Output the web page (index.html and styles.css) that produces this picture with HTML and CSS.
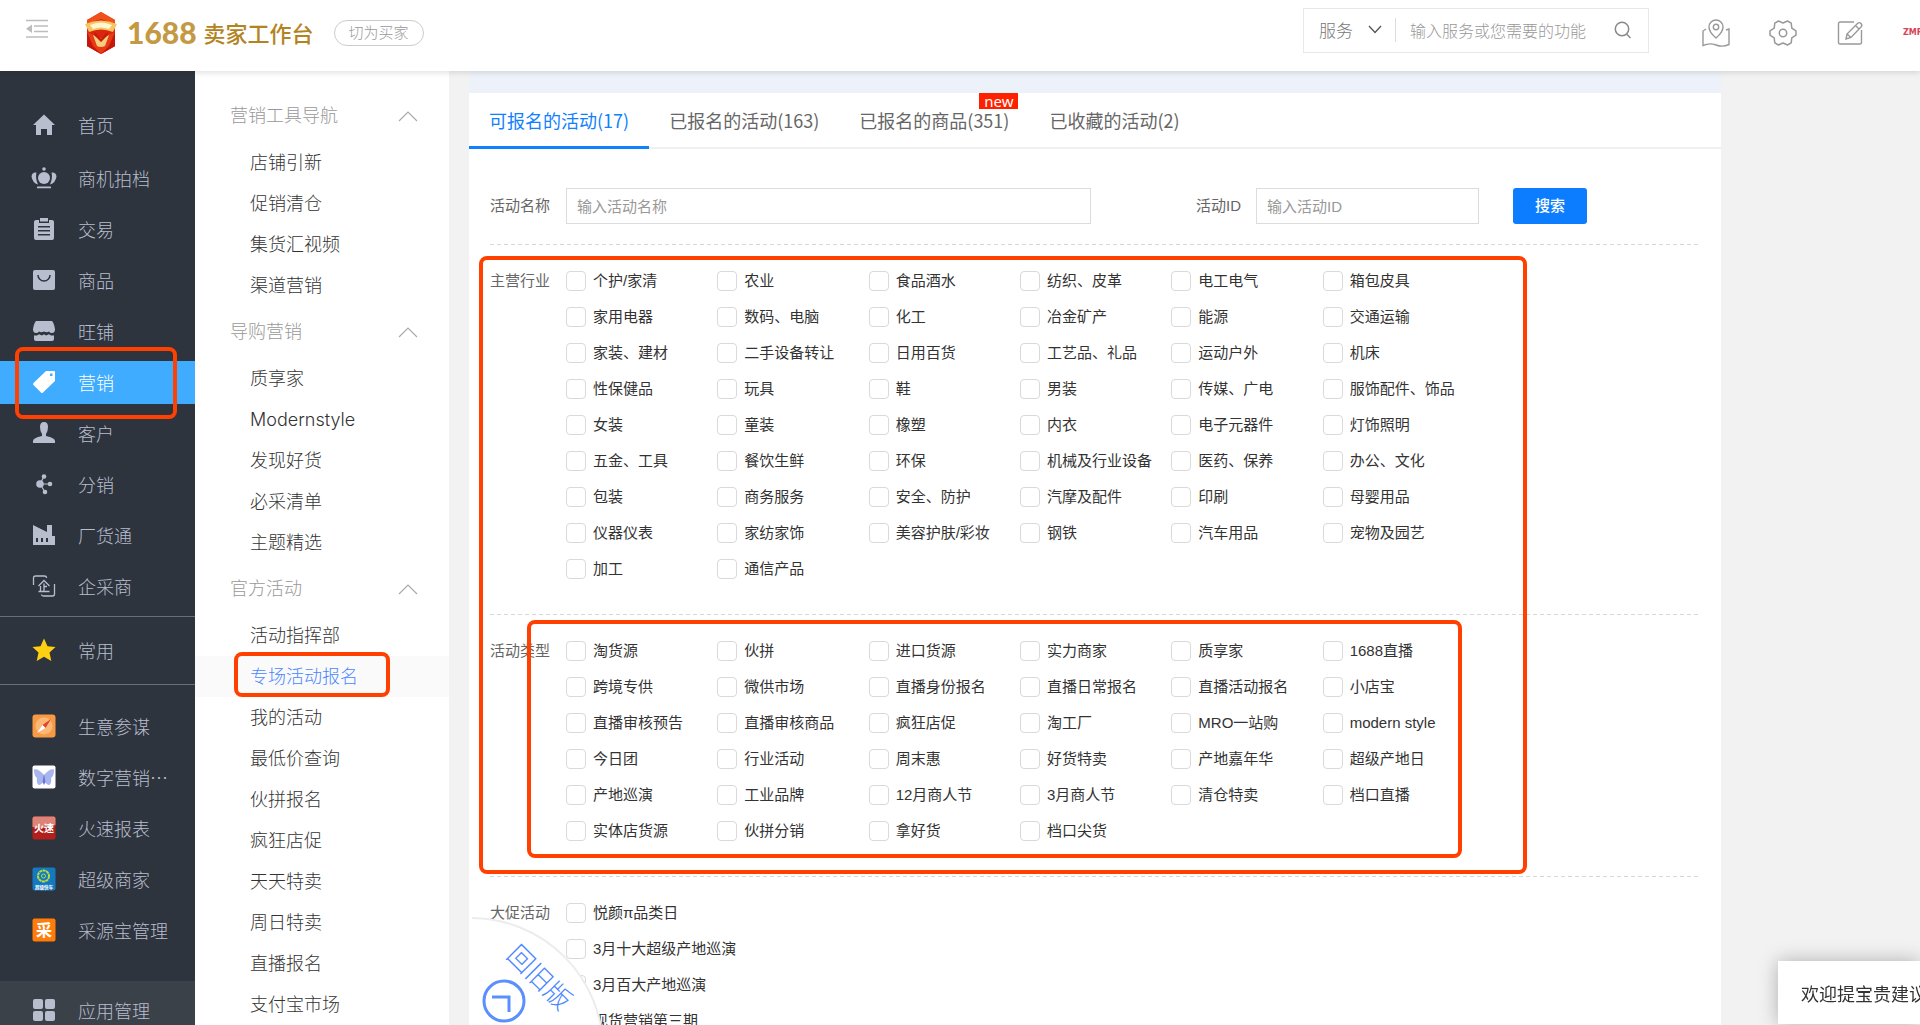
FILE: index.html
```html
<!DOCTYPE html>
<html lang="zh-CN">
<head>
<meta charset="utf-8">
<title>1688 卖家工作台</title>
<link rel="stylesheet" href="styles.css">
</head>
<body>
<header class="topbar">
  <button class="icon-btn menu-toggle" type="button" aria-label="收起菜单">
    <svg width="22" height="20" viewBox="0 0 22 20" fill="none" stroke="#bdbdbd" stroke-width="1.5"><path d="M0 1.500h22M8 7h14M8 12.500h14M0 18h22"/><path d="M0 9.700L6 5.500v8.500z" fill="#bdbdbd" stroke="none"/></svg>
  </button>
  <a class="brand" href="#">
    <svg width="32" height="42" viewBox="0 0 32 42"><path d="M16 0L30 8v26L16 42 2 34V8z" fill="#d9260f"/><path d="M16 0L30 8v4L16 7 2 12V8z" fill="#f0501c"/><path d="M2 20l14 6 14-6v14L16 42 2 34z" fill="#e83a17"/><path d="M2 20l6 14 8 8-14-8zM30 20l-6 14-8 8 14-8z" fill="#c4160c"/><path d="M0 12q16-7 32 0l-4 8q-12-5-24 0z" fill="#f6c463"/><path d="M5 13q11-5 22 0l-3 4q-8-3-16 0z" fill="#fff6d2"/><path d="M8 23l8 4 8-4-4 11q-4 2-8 0z" fill="#f5cf7c"/><path d="M10 20l6 7 6-7 1 3-7 7-7-7z" fill="#c81a0d"/></svg>
    <span class="brand-num">1688</span>
    <span class="brand-name">卖家工作台</span>
  </a>
  <button class="pill" type="button">切为买家</button>
  <form class="search">
    <select class="search-scope" aria-label="搜索范围"><option>服务</option></select>
    <svg class="chev" width="14" height="9" viewBox="0 0 14 9" fill="none" stroke="#555" stroke-width="1.300"><path d="M1 1l6 6.500L13 1"/></svg>
    <input class="search-input" type="text" aria-label="搜索" placeholder="输入服务或您需要的功能">
    <button class="icon-btn" type="button" aria-label="搜索"><svg width="18" height="18" viewBox="0 0 18 18" fill="none" stroke="#888" stroke-width="1.500"><circle cx="8" cy="8" r="6.700"/><path d="M12.500 13l4 4"/></svg></button>
  </form>
  <nav class="tools">
    <button class="icon-btn" type="button" aria-label="地图"><svg width="28" height="28" viewBox="0 0 28 28" fill="none" stroke="#999" stroke-width="1.400"><path d="M4 10L1 12v14.500q6.500-3 13-.5t13-.5V10l-3 1"/><path d="M14 19q-7-6-7-11a7 7 0 0 1 14 0q0 5-7 11z"/><circle cx="14" cy="8" r="2.700"/></svg></button>
    <button class="icon-btn" type="button" aria-label="设置"><svg width="28" height="28" viewBox="0 0 28 28" fill="none" stroke="#999" stroke-width="1.500" stroke-linejoin="round"><path d="M9.500 2l4.500 2 4.500-2 3.700 2.200.6 5 4.200 2.600v4.400l-4.200 2.600-.6 5L18.500 26 14 24l-4.500 2-3.700-2.200-.6-5L1 16.200v-4.400l4.200-2.600.6-5z"/><circle cx="14" cy="14" r="3.700"/></svg></button>
    <button class="icon-btn" type="button" aria-label="反馈"><svg width="28" height="28" viewBox="0 0 28 28" fill="none" stroke="#999" stroke-width="1.400"><path d="M18 3H4a1.500 1.500 0 0 0-1.500 1.500v19A1.500 1.500 0 0 0 4 25h20a1.500 1.500 0 0 0 1.500-1.500V11"/><path d="M10 20l1-5L21.500 4.500a2 2 0 0 1 3.500 3.500L15 18.500zM19.500 6.500l3.500 3.500M11 15l4 3.500"/></svg></button>
    <a class="shop" href="#">ZMRA</a>
  </nav>
</header>

<div class="workspace">
  <nav class="side">
    <ul class="side-list side-main">
      <li><a href="#"><svg viewBox="0 0 24 24"><path d="M12 1.500L23 12h-3v10h-5v-6H9v6H4V12H1z"/></svg>首页</a></li>
      <li><a href="#"><svg viewBox="0 0 24 24"><circle cx="12" cy="3" r="1.800"/><circle cx="12" cy="12" r="6"/><path d="M4.500 6.500Q0 6-.5 10.500.500 17 6 18.500 3 12 4.500 6.500zM19.500 6.500q4.500-.5 5 4-1 6.500-6.500 8 3-6.500 1.500-12zM5 20.500h14v1.800H5z"/></svg>商机拍档</a></li>
      <li><a href="#"><svg viewBox="0 0 24 24"><path fill-rule="evenodd" d="M4 3h3v3h10V3h3q2 0 2 2v16q0 2-2 2H4q-2 0-2-2V5q0-2 2-2zM6 9v1.500h12V9zm0 4v1.500h12V13zm0 4v1.500h12V17z"/><rect x="8" y="1" width="8" height="3.500"/></svg>交易</a></li>
      <li><a href="#"><svg viewBox="0 0 24 24"><rect x="1" y="2" width="22" height="20" rx="2"/><path d="M6 7a6 6 0 0 0 12 0" fill="none" stroke="#2e343d" stroke-width="1.500"/></svg>商品</a></li>
      <li><a href="#"><svg viewBox="0 0 24 24"><path d="M4 2h16q2 2 3 8 0 4-3 4-2 0-3-1.500Q15 14 12 12.500 9 14 7 12.500 6 14 4 14q-3 0-3-4 1-6 3-8z"/><path d="M2 16.500h3l2-1.200 3 1.200 2-1.200 2 1.200 3-1.200 2 1.200h3V20q0 2-2 2H4q-2 0-2-2z"/></svg>旺铺</a></li>
      <li class="active"><a href="#" aria-current="page"><svg viewBox="0 0 24 24"><path fill-rule="evenodd" d="M14 1h8q1 0 1 1v9L11 22.500q-1 1-2 0L1.500 15q-1-1 0-2zM18 3.500v2.500h2.500V3.500z"/></svg>营销</a></li>
      <li><a href="#"><svg viewBox="0 0 24 24"><path d="M12 1q4 0 4 5 0 4-2 7v2q9 2 9 5v2H1v-2q0-3 9-5v-2Q8 10 8 6q0-5 4-5z"/></svg>客户</a></li>
      <li><a href="#"><svg viewBox="0 0 24 24"><circle cx="8" cy="12" r="3.800"/><circle cx="12" cy="4.500" r="2.300"/><circle cx="18" cy="12" r="2.300"/><circle cx="13" cy="20" r="2.300"/><path d="M12 4.500L8 12h10M8 12l5 8" fill="none" stroke="#b8bece" stroke-width="1.200"/></svg>分销</a></li>
      <li><a href="#"><svg viewBox="0 0 24 24"><path fill-rule="evenodd" d="M1 2l14 7V2h5v11h3v9H1zM4 15v4h2v-4zm5 0v4h2v-4zm5 0v4h2v-4z"/></svg>厂货通</a></li>
      <li><a href="#"><svg viewBox="0 0 24 24" class="line-icon"><path d="M1.500 11V4q0-2 2-2h9q2 0 2 2M22.500 10v10q0 2-2 2h-9q-2 0-2-1.500M6.500 12l5.500-5.500 5.500 5.500M12 9.500V17M15 12.500h-3M8.500 12v5M6.500 17.500h11"/></svg>企采商</a></li>
    </ul>
    <ul class="side-list side-fav">
      <li><a href="#"><svg viewBox="0 0 24 24"><path fill="#ffd012" d="M12 .5l3.500 7.700 8 .8-6 5.600 1.800 8.400L12 18.700 4.700 23l1.800-8.400-6-5.600 8-.8z"/></svg>常用</a></li>
    </ul>
    <ul class="side-list side-apps">
      <li><a href="#"><svg viewBox="0 0 24 24"><rect x=".5" y=".5" width="23" height="23" rx="3" fill="#f79a45"/><circle cx="12" cy="12" r="8.500" fill="#fbb877"/><path d="M19 5l-5.500 9-3-3z" fill="#e2452b"/><path d="M5 19l5.500-8 3 3z" fill="#fff"/></svg>生意参谋</a></li>
      <li><a href="#"><svg viewBox="0 0 24 24"><rect x=".5" y=".5" width="23" height="23" rx="2" fill="#fff"/><path d="M12 10Q6 3 1.800 4.500 2 11 5 13q-1 5 1.500 7Q10 20 12 15q2 5 5.500 5 2.500-2 1.500-7 3-2 3.200-8.500Q18 3 12 10z" fill="#a9b6ee"/><path d="M12 9l1.500 8L12 20l-1.500-3z" fill="#6479d8"/></svg>数字营销⋯</a></li>
      <li><a href="#"><svg viewBox="0 0 24 24"><rect x=".5" y=".5" width="23" height="23" rx="2" fill="#b3201c"/><path d="M2.500.5h19q2 0 2 2V9q-11 5-23 2V2.500q0-2 2-2z" fill="#dc8478"/><text x="12" y="16" class="tile-text" font-size="10">火速</text></svg>火速报表</a></li>
      <li><a href="#"><svg viewBox="0 0 24 24"><rect x=".5" y=".5" width="23" height="23" rx="2" fill="#1479c0"/><circle cx="11.500" cy="9" r="5.500" fill="none" stroke="#b9dc3c" stroke-width="2" stroke-dasharray="3 .5"/><circle cx="11.500" cy="9" r="2" fill="none" stroke="#b9dc3c"/><text x="12" y="21.500" class="tile-text" font-size="4.500">超级快车</text></svg>超级商家</a></li>
      <li><a href="#"><svg viewBox="0 0 24 24"><rect x=".5" y=".5" width="23" height="23" rx="2" fill="#ff7c0a"/><text x="12" y="18" class="tile-text" font-size="16">采</text></svg>采源宝管理</a></li>
    </ul>
    <ul class="side-list side-manage">
      <li><a href="#"><svg viewBox="0 0 24 24"><rect x="1" y="1" width="10" height="10" rx="2"/><rect x="13" y="1" width="10" height="10" rx="2"/><rect x="1" y="13" width="10" height="10" rx="2"/><rect x="13" y="13" width="10" height="10" rx="2"/></svg>应用管理</a></li>
    </ul>
  </nav>

  <nav class="sub">
    <button class="sub-head" type="button">营销工具导航<svg width="20" height="12" viewBox="0 0 20 12"><path d="M1 11l9-9 9 9"/></svg></button>
    <ul>
      <li><a href="#">店铺引新</a></li>
      <li><a href="#">促销清仓</a></li>
      <li><a href="#">集货汇视频</a></li>
      <li><a href="#">渠道营销</a></li>
    </ul>
    <button class="sub-head" type="button">导购营销<svg width="20" height="12" viewBox="0 0 20 12"><path d="M1 11l9-9 9 9"/></svg></button>
    <ul>
      <li><a href="#">质享家</a></li>
      <li><a href="#">Modernstyle</a></li>
      <li><a href="#">发现好货</a></li>
      <li><a href="#">必采清单</a></li>
      <li><a href="#">主题精选</a></li>
    </ul>
    <button class="sub-head" type="button">官方活动<svg width="20" height="12" viewBox="0 0 20 12"><path d="M1 11l9-9 9 9"/></svg></button>
    <ul>
      <li><a href="#">活动指挥部</a></li>
      <li class="active"><a href="#" aria-current="page">专场活动报名</a></li>
      <li><a href="#">我的活动</a></li>
      <li><a href="#">最低价查询</a></li>
      <li><a href="#">伙拼报名</a></li>
      <li><a href="#">疯狂店促</a></li>
      <li><a href="#">天天特卖</a></li>
      <li><a href="#">周日特卖</a></li>
      <li><a href="#">直播报名</a></li>
      <li><a href="#">支付宝市场</a></li>
    </ul>
  </nav>

  <main class="main">
    <div class="panel">
      <div class="tabs" role="tablist">
        <button class="tab selected" type="button" role="tab" aria-selected="true">可报名的活动(17)</button>
        <button class="tab" type="button" role="tab">已报名的活动(163)</button>
        <button class="tab" type="button" role="tab">已报名的商品(351)<span class="badge">new</span></button>
        <button class="tab" type="button" role="tab">已收藏的活动(2)</button>
      </div>

      <form class="filters">
        <div class="query">
          <label for="act-name">活动名称</label>
          <input class="field name-field" id="act-name" type="text" placeholder="输入活动名称">
          <label class="id-label" for="act-id">活动ID</label>
          <input class="field id-field" id="act-id" type="text" placeholder="输入活动ID">
          <button class="submit" type="button">搜索</button>
        </div>

        <div class="marked">
          <section class="group">
            <h2>主营行业</h2>
            <div class="options">
              <label><input type="checkbox">个护/家清</label>
              <label><input type="checkbox">农业</label>
              <label><input type="checkbox">食品酒水</label>
              <label><input type="checkbox">纺织、皮革</label>
              <label><input type="checkbox">电工电气</label>
              <label><input type="checkbox">箱包皮具</label>
              <label><input type="checkbox">家用电器</label>
              <label><input type="checkbox">数码、电脑</label>
              <label><input type="checkbox">化工</label>
              <label><input type="checkbox">冶金矿产</label>
              <label><input type="checkbox">能源</label>
              <label><input type="checkbox">交通运输</label>
              <label><input type="checkbox">家装、建材</label>
              <label><input type="checkbox">二手设备转让</label>
              <label><input type="checkbox">日用百货</label>
              <label><input type="checkbox">工艺品、礼品</label>
              <label><input type="checkbox">运动户外</label>
              <label><input type="checkbox">机床</label>
              <label><input type="checkbox">性保健品</label>
              <label><input type="checkbox">玩具</label>
              <label><input type="checkbox">鞋</label>
              <label><input type="checkbox">男装</label>
              <label><input type="checkbox">传媒、广电</label>
              <label><input type="checkbox">服饰配件、饰品</label>
              <label><input type="checkbox">女装</label>
              <label><input type="checkbox">童装</label>
              <label><input type="checkbox">橡塑</label>
              <label><input type="checkbox">内衣</label>
              <label><input type="checkbox">电子元器件</label>
              <label><input type="checkbox">灯饰照明</label>
              <label><input type="checkbox">五金、工具</label>
              <label><input type="checkbox">餐饮生鲜</label>
              <label><input type="checkbox">环保</label>
              <label><input type="checkbox">机械及行业设备</label>
              <label><input type="checkbox">医药、保养</label>
              <label><input type="checkbox">办公、文化</label>
              <label><input type="checkbox">包装</label>
              <label><input type="checkbox">商务服务</label>
              <label><input type="checkbox">安全、防护</label>
              <label><input type="checkbox">汽摩及配件</label>
              <label><input type="checkbox">印刷</label>
              <label><input type="checkbox">母婴用品</label>
              <label><input type="checkbox">仪器仪表</label>
              <label><input type="checkbox">家纺家饰</label>
              <label><input type="checkbox">美容护肤/彩妆</label>
              <label><input type="checkbox">钢铁</label>
              <label><input type="checkbox">汽车用品</label>
              <label><input type="checkbox">宠物及园艺</label>
              <label><input type="checkbox">加工</label>
              <label><input type="checkbox">通信产品</label>
            </div>
          </section>
          <section class="group types">
            <h2>活动类型</h2>
            <div class="options">
              <label><input type="checkbox">淘货源</label>
              <label><input type="checkbox">伙拼</label>
              <label><input type="checkbox">进口货源</label>
              <label><input type="checkbox">实力商家</label>
              <label><input type="checkbox">质享家</label>
              <label><input type="checkbox">1688直播</label>
              <label><input type="checkbox">跨境专供</label>
              <label><input type="checkbox">微供市场</label>
              <label><input type="checkbox">直播身份报名</label>
              <label><input type="checkbox">直播日常报名</label>
              <label><input type="checkbox">直播活动报名</label>
              <label><input type="checkbox">小店宝</label>
              <label><input type="checkbox">直播审核预告</label>
              <label><input type="checkbox">直播审核商品</label>
              <label><input type="checkbox">疯狂店促</label>
              <label><input type="checkbox">淘工厂</label>
              <label><input type="checkbox">MRO一站购</label>
              <label><input type="checkbox">modern style</label>
              <label><input type="checkbox">今日团</label>
              <label><input type="checkbox">行业活动</label>
              <label><input type="checkbox">周末惠</label>
              <label><input type="checkbox">好货特卖</label>
              <label><input type="checkbox">产地嘉年华</label>
              <label><input type="checkbox">超级产地日</label>
              <label><input type="checkbox">产地巡演</label>
              <label><input type="checkbox">工业品牌</label>
              <label><input type="checkbox">12月商人节</label>
              <label><input type="checkbox">3月商人节</label>
              <label><input type="checkbox">清仓特卖</label>
              <label><input type="checkbox">档口直播</label>
              <label><input type="checkbox">实体店货源</label>
              <label><input type="checkbox">伙拼分销</label>
              <label><input type="checkbox">拿好货</label>
              <label><input type="checkbox">档口尖货</label>
            </div>
          </section>
        </div>

        <section class="group">
          <h2>大促活动</h2>
          <div class="options single">
            <label><input type="checkbox">悦颜π品类日</label>
            <label><input type="checkbox">3月十大超级产地巡演</label>
            <label><input type="checkbox">3月百大产地巡演</label>
            <label><input type="checkbox">现货营销第三期</label>
          </div>
        </section>
      </form>
    </div>

    <a class="back-old" href="#" aria-label="回旧版">
      <svg width="140" height="110" viewBox="0 0 140 110"><circle cx="-1" cy="135" r="132" fill="#fff" stroke="#ececec" stroke-width="2"/><circle cx="32" cy="86" r="20" fill="none" stroke="#5a90fb" stroke-width="3"/><path d="M20 82h17v15" fill="none" stroke="#5a90fb" stroke-width="3"/><text x="68" y="62" transform="rotate(45 68 62)" dy="10">回旧版</text></svg>
    </a>
  </main>
</div>
<aside class="toast">欢迎提宝贵建议</aside>
</body>
</html>
```

FILE: styles.css
```css
*, ::before, ::after { box-sizing: border-box; }

body {
  margin: 0;
  height: 100vh;
  display: flex;
  flex-direction: column;
  overflow: hidden;
  background: #f2f2f2;
  color: #333;
  font: 15px/20px "Liberation Sans", "Noto Sans CJK SC", sans-serif;
}

a { color: inherit; text-decoration: none; }
ul { margin: 0; padding: 0; list-style: none; }
button, input, select { font: inherit; color: inherit; }
button { margin: 0; padding: 0; border: 0; background: none; }
svg { display: block; flex: none; }
.icon-btn { display: block; }

/* top bar */
.topbar {
  position: relative;
  z-index: 5;
  flex: none;
  display: flex;
  align-items: center;
  height: 71px;
  padding: 0 0 18px 26px;
  background: #fff;
  box-shadow: 0 1px 6px rgba(0, 0, 0, .15);
}
.menu-toggle { margin: 4px 37px 0 0; }
.brand {
  display: flex;
  align-items: center;
  padding-top: 13px;
}
.brand-num {
  margin: 0 7px 2px 10px;
  color: #c39a43;
  font: 900 30px/36px Lato, sans-serif;
}
.brand-name {
  margin-bottom: 2px;
  color: #b3831f;
  font: 500 22px/36px "Noto Sans CJK SC", sans-serif;
}
.pill {
  margin: 13px 0 0 20px;
  width: 90px;
  height: 26px;
  border: 1px solid #ccc;
  border-radius: 13px;
  color: #999;
  line-height: 24px;
  font-weight: 300;
}
.search {
  display: flex;
  align-items: center;
  width: 346px;
  height: 45px;
  margin: 8px 53px 0 auto;
  padding: 0 0 2px 15px;
  border: 1px solid #e8e8e8;
  color: #777;
  font: 17px/24px "Noto Sans CJK SC", sans-serif;
}
.search-scope {
  width: 36px;
  padding: 0;
  border: 0;
  appearance: none;
  background: none;
  font-weight: 300;
}
.chev { margin: 0 13px; }
.search-input {
  flex: 1;
  min-width: 0;
  height: 24px;
  padding: 0 0 0 14px;
  border: 0;
  border-left: 1px solid #ddd;
  background: none;
  font-size: 16px;
  font-weight: 300;
}
.search .icon-btn { margin-right: 16px; }
::placeholder { color: #999; opacity: 1; }
.tools { display: flex; align-items: center; gap: 39px; padding-top: 13px; }
.shop {
  width: 17px;
  overflow: hidden;
  color: #d8415a;
  font: bold 8px/12px "DejaVu Sans", sans-serif;
}

.workspace { flex: 1; min-height: 0; display: flex; }

/* primary navigation */
.side {
  flex: none;
  width: 195px;
  overflow: hidden;
  padding-top: 33px;
  background: #2e343d;
  color: #b8bece;
}
.side-list { display: grid; gap: 8px; }
.side-list li { position: relative; }
.side-list a {
  display: flex;
  align-items: center;
  gap: 22px;
  height: 43px;
  padding: 0 0 1px 32px;
  font: 300 18px/24px "Noto Sans CJK SC", sans-serif;
  white-space: nowrap;
}
.side-list svg { width: 24px; height: 24px; fill: currentColor; overflow: visible; }
.side-list .line-icon { fill: none; stroke: currentColor; stroke-width: 1.3; }
.side-main { padding-bottom: 8px; }
.side-main li:first-child { padding-bottom: 2px; }
.side-fav { padding: 12px 0; border: solid #6b6f74; border-width: 1px 0; }
.side-apps { padding: 20px 0 29px; }
.side-manage { padding: 8px 0; background: #3b4149; }
.side .active { z-index: 3; background: #40acff; color: #fff; }
.tile-text { fill: #fff; font-weight: 700; text-anchor: middle; }

/* secondary navigation */
.sub {
  flex: none;
  width: 254px;
  padding-top: 19px;
  overflow: hidden;
  background: #fff;
  font: 300 18px/41px Inter, "Noto Sans CJK SC", sans-serif;
}
.sub-head {
  display: flex;
  align-items: center;
  justify-content: space-between;
  width: 100%;
  height: 41px;
  margin: 5px 0 6px;
  padding: 0 31px 0 35px;
  color: #999;
}
.sub-head path { fill: none; stroke: #aaa; stroke-width: 1.2; }
.sub li { position: relative; height: 41px; padding-left: 55px; }
.sub .active { background: #fafafa; color: #4a86ff; }

/* marker frames */
.side .active::after,
.sub .active::after,
.marked::after,
.types::after {
  content: "";
  position: absolute;
  border: 4px solid #ff4000;
  border-radius: 8px;
  pointer-events: none;
}
.side .active::after { inset: -14px 18px -15px 15px; }
.sub .active::after { left: 39px; top: -4px; width: 156px; height: 45px; }
.marked::after { left: -11px; top: 12px; bottom: 2px; width: 1048px; }
.types::after { left: 37px; top: 6px; bottom: 18px; width: 935px; }

/* content */
.main { position: relative; flex: 1; min-width: 0; padding-left: 20px; overflow: hidden; }
.panel {
  max-width: 1252px;
  min-height: 100%;
  border-top: 22px solid #edf1f9;
  background: #fff;
}
.tabs { display: flex; border-bottom: 2px solid #f0f0f0; }
.tab {
  position: relative;
  height: 56px;
  margin-bottom: -2px;
  padding: 1px 20px 0;
  border-bottom: 3px solid transparent;
  color: #666;
  font: 18px/52px "Noto Sans CJK SC", sans-serif;
}
.tab.selected { border-color: #1080ff; color: #1080ff; }
.badge {
  position: absolute;
  top: 0;
  right: 11px;
  width: 39px;
  height: 16px;
  background: #ff2000;
  color: #fff;
  font: 15px/16px "Noto Sans", sans-serif;
}
.filters { padding: 39px 20px 0 21px; }
.query { display: flex; align-items: center; padding-bottom: 20px; color: #666; }
.query label { width: 76px; }
.query .id-label { width: 60px; margin-left: auto; }
.field {
  height: 36px;
  padding: 0 10px;
  border: 1px solid #dcdcdc;
  background: #fff;
}
.name-field { flex: 0 1 525px; min-width: 0; }
.id-field { width: 223px; }
.submit {
  width: 74px;
  height: 36px;
  margin: 0 114px 0 34px;
  border-radius: 3px;
  background: #0c7dff;
  color: #fff;
  font-weight: 500;
}
.marked { position: relative; }
.group {
  position: relative;
  display: flex;
  padding: 19px 0 27px;
  background: repeating-linear-gradient(90deg, #d8d8d8 0 4px, #fff 4px 7px) top / 100% 1px no-repeat;
}
.group h2 {
  flex: none;
  width: 76px;
  margin: 0;
  color: #666;
  font-size: 15px;
  font-weight: 400;
  line-height: 36px;
}
.options {
  flex: 1;
  display: grid;
  grid-template-columns: repeat(6, 1fr);
  max-width: 908px;
}
.options.single { grid-template-columns: 1fr; }
.options label {
  display: flex;
  align-items: center;
  gap: 7px;
  height: 36px;
  white-space: nowrap;
}
.options input {
  appearance: none;
  width: 20px;
  height: 20px;
  margin: 0;
  border: 1px solid #d9d9d9;
  border-radius: 4px;
  background: #fff;
}

/* floating pieces */
.back-old { position: absolute; left: 23px; bottom: 0; }
.back-old text {
  fill: #4a86ff;
  font: 300 26px "Noto Sans CJK SC", sans-serif;
  text-anchor: middle;
}
.toast {
  position: fixed;
  right: 0;
  bottom: 1px;
  z-index: 6;
  width: 142px;
  padding: 20px 0 19px 23px;
  overflow: hidden;
  background: #fff;
  box-shadow: 0 0 18px rgba(0, 0, 0, .28);
  font: 18px/24px "Noto Sans CJK SC", sans-serif;
  white-space: nowrap;
}
```
